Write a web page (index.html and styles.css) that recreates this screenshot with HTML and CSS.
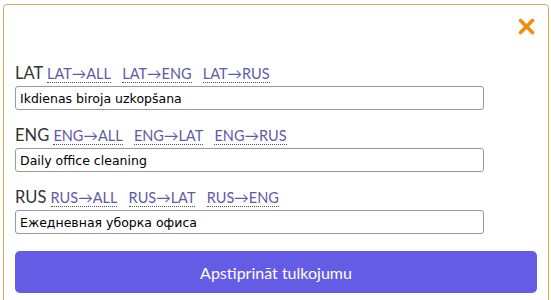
FILE: index.html
```html
<!DOCTYPE html>
<html lang="lv">
<head>
    <meta charset="UTF-8">
    <meta name="viewport" content="width=device-width, initial-scale=1.0">
    <title>Tulkojums</title>
    <link rel="stylesheet" href="styles.css">
</head>
<body>
    <!-- Tulkojuma logs -->
    <div class="modal">
        <div class="modal-head">
            <span class="close-btn" title="Aizvērt">
                <svg width="17" height="17" viewBox="0 0 17 17">
                    <path d="M2.5 2.5 L14.5 14.5 M14.5 2.5 L2.5 14.5" stroke="#f28c0f" stroke-width="3.6" stroke-linecap="round"/>
                </svg>
            </span>
        </div>

        <div class="field">
            <div class="field-label">LAT
                <a class="tr-link" href="#">LAT→ALL</a>
                <a class="tr-link" href="#">LAT→ENG</a>
                <a class="tr-link" href="#">LAT→RUS</a>
            </div>
            <input class="field-input" type="text" value="Ikdienas biroja uzkopšana">
        </div>

        <div class="field">
            <div class="field-label">ENG
                <a class="tr-link" href="#">ENG→ALL</a>
                <a class="tr-link" href="#">ENG→LAT</a>
                <a class="tr-link" href="#">ENG→RUS</a>
            </div>
            <input class="field-input" type="text" value="Daily office cleaning">
        </div>

        <div class="field">
            <div class="field-label">RUS
                <a class="tr-link" href="#">RUS→ALL</a>
                <a class="tr-link" href="#">RUS→LAT</a>
                <a class="tr-link" href="#">RUS→ENG</a>
            </div>
            <input class="field-input" type="text" value="Ежедневная уборка офиса">
        </div>

        <button class="confirm-btn">Apstiprināt tulkojumu</button>
    </div>
</body>
</html>
```

FILE: styles.css
```css
/* Grunddesign */
body {
    margin: 0;
    padding: 4px 2px 0 3px;
    background-color: #ffffff;
    font-family: Lato, "Noto Sans", sans-serif;
    color: #333;
}

/* Logs */
.modal {
    border: 1px solid #e3a25a;
    border-radius: 4px;
    padding: 12px 11px 14px 11px;
    height: 300px;
    box-sizing: border-box;
}

.modal-head {
    display: flex;
    justify-content: flex-end;
    height: 46px;
    padding-right: 2px;
}

.close-btn {
    display: block;
    width: 17px;
    height: 17px;
    cursor: pointer;
    margin-top: 1px;
}

/* Lauki */
.field {
    margin-bottom: 15px;
}

.field-label {
    font-size: 16.5px;
    line-height: 21px;
    color: #333;
    height: 23px;
}

.tr-link {
    font-size: 14.5px;
    color: #5d5aa8;
    text-decoration: none;
    border-bottom: 1px dotted #555;
    margin-right: 7px;
}

.field-input {
    display: block;
    width: 469px;
    height: 24px;
    box-sizing: border-box;
    border: 1px solid #999;
    border-radius: 3px;
    padding: 0 4px;
    font-family: "DejaVu Sans", Verdana, sans-serif;
    font-size: 12.5px;
    color: #000;
}

/* Poga */
.confirm-btn {
    display: block;
    width: 100%;
    height: 42px;
    margin-top: 17px;
    background-color: #645ce4;
    color: #fff;
    border: none;
    border-radius: 5px;
    font-family: Lato, "Noto Sans", sans-serif;
    font-size: 16px;
    cursor: pointer;
}
```
